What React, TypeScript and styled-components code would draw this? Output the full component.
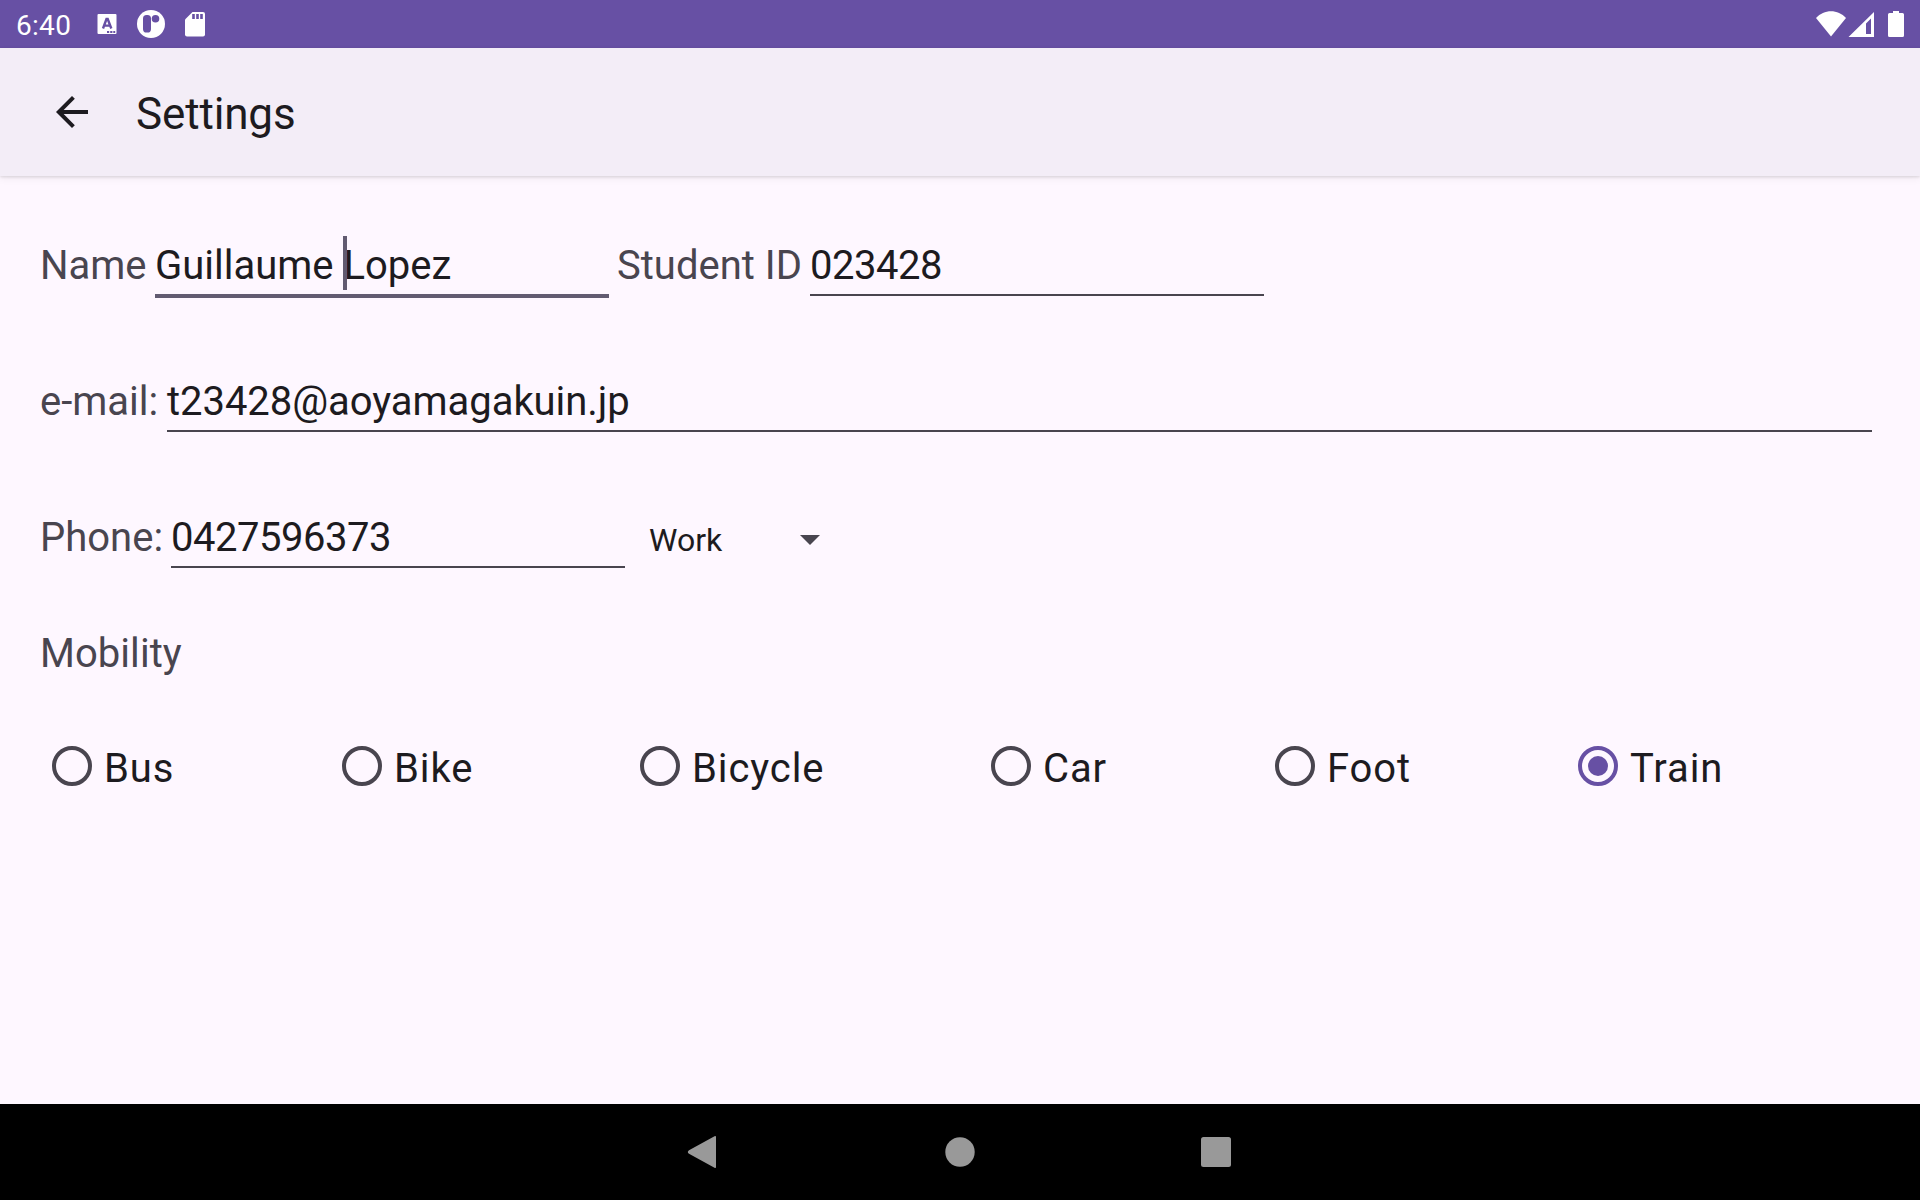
import React, { useState } from "react";
import styled, { createGlobalStyle } from "styled-components";

const color = {
  primary: "#6750a4",
  secondary: "#625b71",
  surface: "#fef7ff",
  toolbar: "#f3edf7",
  text: "#1d1b20",
  muted: "#49454f",
  nav: "#999999",
};

const GlobalStyle = createGlobalStyle`
  * { box-sizing: border-box; }
  body { margin: 0; background: ${color.surface}; }
`;

const Screen = styled.div`
  width: 1920px;
  height: 1200px;
  display: flex;
  flex-direction: column;
  overflow: hidden;
  background: ${color.surface};
  color: ${color.text};
  font-family: Roboto, "Noto Sans", sans-serif;
`;

const StatusBar = styled.header`
  height: 48px;
  flex: none;
  display: flex;
  justify-content: space-between;
  padding-left: 16px;
  background: ${color.primary};
  color: #fff;
`;

const StatusGroup = styled.div`
  display: flex;
`;

const Clock = styled.span`
  width: 74px;
  font-size: 28px;
  line-height: 52px;
  letter-spacing: 0.3px;
`;

const Toolbar = styled.div`
  height: 128px;
  flex: none;
  display: flex;
  align-items: center;
  padding-left: 48px;
  background: ${color.toolbar};
  box-shadow: 0 1px 3px rgba(0, 0, 0, 0.13), 0 3px 8px rgba(0, 0, 0, 0.05);
`;

const BackButton = styled.button`
  width: 48px;
  height: 48px;
  padding: 0;
  border: 0;
  background: none;
  color: ${color.text};
`;

const Title = styled.h1`
  margin: 4px 0 0 40px;
  font-size: 44px;
  line-height: 52px;
  font-weight: 400;
  letter-spacing: -0.15px;
`;

const Form = styled.main`
  flex: 1;
  padding: 65px 40px 0;
`;

const Row = styled.div`
  display: flex;
  height: 57px;
  margin-bottom: 79px;
  font-size: 40px;
  line-height: 50px;
  white-space: nowrap;
`;

const Label = styled.label<{ $width?: number }>`
  flex: none;
  width: ${(p) => (p.$width ? `${p.$width}px` : "auto")};
  color: ${color.muted};
`;

const Field = styled.div<{ $focused?: boolean; $wide?: boolean; $numeric?: boolean }>`
  position: relative;
  flex: ${(p) => (p.$wide ? "1" : "none")};
  width: ${(p) => (p.$wide ? "auto" : "454px")};
  height: ${(p) => (p.$focused ? 57 : 55)}px;
  margin: 0 8px;
  letter-spacing: ${(p) => (p.$numeric ? "-0.48px" : p.$wide ? "-0.05px" : "0")};
  border-bottom: ${(p) =>
    p.$focused ? `4px solid ${color.secondary}` : `2px solid ${color.muted}`};
`;

const Caret = styled.span`
  position: absolute;
  left: 188px;
  top: -5px;
  width: 4px;
  height: 54px;
  background: ${color.secondary};
`;

const Dropdown = styled.div`
  display: flex;
  justify-content: space-between;
  width: 171px;
  margin-left: 16px;
  font-size: 32px;
  line-height: 54px;
`;

const DropdownArrow = styled.span`
  width: 0;
  height: 0;
  margin-top: 22px;
  border: 10px solid transparent;
  border-top-color: ${color.muted};
  border-bottom: 0;
`;

const SectionTitle = styled.h2`
  margin: -20px 0 0;
  height: 117px;
  color: ${color.muted};
  font-size: 40px;
  line-height: 50px;
  font-weight: 400;
  letter-spacing: 0.05px;
`;

const RadioGroup = styled.div`
  display: grid;
  grid-template-columns: 290px 298px 351px 284px 303px 1fr;
`;

const Option = styled.div`
  display: flex;
  align-items: center;
  height: 40px;
  padding-left: 12px;
  font-size: 40px;
  letter-spacing: 0.9px;
  line-height: 48px;
`;

const Ring = styled.span<{ $checked: boolean }>`
  flex: none;
  width: 40px;
  height: 40px;
  border: 4px solid ${(p) => (p.$checked ? color.primary : color.muted)};
  border-radius: 50%;
  padding: 6px;
`;

const Dot = styled.span`
  display: block;
  width: 20px;
  height: 20px;
  border-radius: 50%;
  background: ${color.primary};
`;

const OptionText = styled.span`
  margin: 6px 0 0 12px;
`;

const NavBar = styled.footer`
  flex: none;
  height: 96px;
  display: flex;
  align-items: center;
  justify-content: center;
  gap: 208px;
  background: #000;
`;

const NotificationIcons = () => (
  <svg width="120" height="48" viewBox="90 0 120 48" fill="#fff">
    <rect x="97.5" y="14" width="19" height="20" rx="1" />
    <path
      d="M103 28.5 106.5 19h1.2l3.6 9.5M104.4 25.6h5.4"
      fill="none"
      stroke={color.primary}
      strokeWidth="2.4"
    />
    <path d="M107 31h2.2v2H107zM110.2 31h2.2v2h-2.2zM113.3 31h1.9v2h-1.9z" fill={color.primary} />
    <circle cx="151" cy="24" r="14" />
    <rect x="143" y="15" width="8" height="17.6" rx="3.6" fill={color.primary} />
    <circle cx="155.5" cy="18.8" r="3.8" fill={color.primary} />
    <path d="M192.5 12H203a2 2 0 0 1 2 2v20.5a2 2 0 0 1-2 2h-16a2 2 0 0 1-2-2V19.5z" />
    <path d="M192.2 14h2.6v5h-2.6zM196.2 14h2.6v5h-2.6zM200.2 14h2.6v5h-2.6z" fill={color.primary} />
  </svg>
);

const SystemIcons = () => (
  <svg width="120" height="48" viewBox="1800 0 120 48" fill="#fff">
    <path d="M1831 36.5 1816 18C1824 9 1838 9 1846 18z" />
    <path fillRule="evenodd" d="M1874 12v25h-25.5zM1871 18.5l-5 5V34h5z" />
    <path d="M1893 11h6v2h3.500a1.500 1.500 0 0 1 1.500 1.500v21a1.500 1.500 0 0 1-1.500 1.500h-13a1.500 1.500 0 0 1-1.500-1.500v-21a1.500 1.500 0 0 1 1.500-1.500h3.500z" />
  </svg>
);

const ArrowBack = () => (
  <svg width="48" height="48" viewBox="0 0 24 24" fill="currentColor" display="block">
    <path d="M20 11H7.83l5.59-5.59L12 4l-8 8 8 8 1.41-1.41L7.83 13H20z" />
  </svg>
);

const NavIcon = ({ children }: { children: React.ReactNode }) => (
  <svg width="48" height="48" viewBox="0 0 48 48" fill={color.nav}>
    {children}
  </svg>
);

const modes = ["Bus", "Bike", "Bicycle", "Car", "Foot", "Train"];

export default function App() {
  const [mode, setMode] = useState("Train");
  return (
    <>
      <GlobalStyle />
      <Screen>
        <StatusBar>
          <StatusGroup>
            <Clock>6:40</Clock>
            <NotificationIcons />
          </StatusGroup>
          <SystemIcons />
        </StatusBar>
        <Toolbar>
          <BackButton aria-label="Back">
            <ArrowBack />
          </BackButton>
          <Title>Settings</Title>
        </Toolbar>
        <Form>
          <Row>
            <Label $width={107}>Name</Label>
            <Field $focused>
              Guillaume Lopez
              <Caret />
            </Field>
            <Label $width={185}>Student ID</Label>
            <Field $numeric>023428</Field>
          </Row>
          <Row>
            <Label $width={119}>e-mail:</Label>
            <Field $wide>t23428@aoyamagakuin.jp</Field>
          </Row>
          <Row>
            <Label $width={123}>Phone:</Label>
            <Field $numeric>0427596373</Field>
            <Dropdown>
              Work
              <DropdownArrow />
            </Dropdown>
          </Row>
          <SectionTitle>Mobility</SectionTitle>
          <RadioGroup role="radiogroup">
            {modes.map((name) => (
              <Option
                key={name}
                role="radio"
                aria-checked={mode === name}
                onClick={() => setMode(name)}
              >
                <Ring $checked={mode === name}>{mode === name && <Dot />}</Ring>
                <OptionText>{name}</OptionText>
              </Option>
            ))}
          </RadioGroup>
        </Form>
        <NavBar>
          <NavIcon>
            <path d="M9 22.2 34.5 8.3Q36 7.5 36 9v30q0 1.500-1.500.7L9 25.800q-2.400-1.800 0-3.600z" />
          </NavIcon>
          <NavIcon>
            <circle cx="24" cy="24" r="14.7" />
          </NavIcon>
          <NavIcon>
            <rect x="9" y="9" width="30" height="30" rx="2.5" />
          </NavIcon>
        </NavBar>
      </Screen>
    </>
  );
}
